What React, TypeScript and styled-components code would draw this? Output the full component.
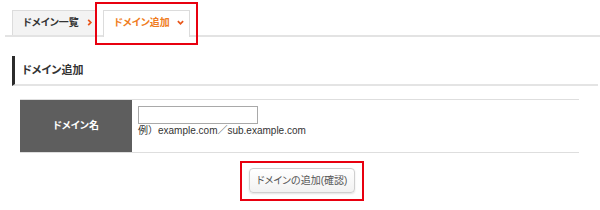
import React from "react";
import styled, { createGlobalStyle } from "styled-components";

const Global = createGlobalStyle`
  html, body { margin: 0; padding: 0; background: #fff; }
  body {
    font-family: "Liberation Sans", "Noto Sans CJK JP", sans-serif;
    color: #333;
    font-size: 10px;
  }
`;

const Page = styled.div`
  width: 600px;
  height: 210px;
  overflow: hidden;
`;

const TabBar = styled.div`
  display: flex;
  align-items: flex-end;
  gap: 7px;
  margin-left: 5px;
  padding: 10px 0 0 7px;
  border-bottom: 2px solid #e3e3e3;
`;

const Tab = styled.div<{ $active?: boolean; $width: number }>`
  position: relative;
  box-sizing: border-box;
  width: ${(p) => p.$width}px;
  height: ${(p) => (p.$active ? 27 : 25)}px;
  margin-bottom: ${(p) => (p.$active ? -2 : 0)}px;
  display: flex;
  align-items: center;
  gap: 7px;
  padding: 0 0 ${(p) => (p.$active ? 3 : 1)}px 10px;
  background: ${(p) => (p.$active ? "#fff" : "#f3f3f3")};
  border: 1px solid #dcdcdc;
  border-bottom: none;
  font-weight: bold;
  font-size: 10px;
  line-height: 12px;
  font-feature-settings: "palt";
  color: ${(p) => (p.$active ? "#ef7d22" : "#333")};
  outline: ${(p) => (p.$active ? "2px solid #e8000f" : "none")};
  outline-offset: 6px;
`;

const Chevron = styled.svg`
  flex: none;
  width: 7px;
  height: 7px;
`;

const Heading = styled.h2`
  margin: 19px 2px 0 12px;
  height: 28px;
  box-sizing: content-box;
  display: flex;
  align-items: center;
  padding-left: 7px;
  border-left: 3px solid #2b2b2b;
  border-bottom: 2px solid #e4e4e4;
  font-size: 11px;
  font-weight: bold;
  line-height: 14px;
  font-feature-settings: "palt";
  color: #333;
`;

const FormTable = styled.div`
  margin: 13px 0 0 20px;
  width: 559px;
  display: grid;
  grid-template-columns: 112px 1fr;
  border-top: 1px solid #dedede;
  border-bottom: 1px solid #dedede;
`;

const HeadCell = styled.div`
  background: #5e5e5e;
  color: #fff;
  font-weight: bold;
  font-size: 10px;
  line-height: 12px;
  font-feature-settings: "palt";
  display: flex;
  align-items: center;
  justify-content: center;
  height: 52px;
`;

const BodyCell = styled.div`
  padding: 6px 6px 0 6px;
`;

const TextInput = styled.input`
  display: block;
  box-sizing: border-box;
  width: 120px;
  height: 18px;
  margin: 0;
  border: 1px solid #a9a9a9;
  background: #fff;
`;

const Example = styled.div`
  margin-top: 1px;
  font-size: 10px;
  line-height: 12px;
  color: #333;
`;

const Actions = styled.div`
  display: flex;
  justify-content: center;
  padding: 8px 0 0 4px;
`;

const Highlight = styled.div`
  display: flex;
  padding: 5px 7px 6px 7px;
  border: 2px solid #e8000f;
`;

const Button = styled.button`
  box-sizing: border-box;
  width: 106px;
  height: 25px;
  padding: 0;
  border: 1px solid #cfcfcf;
  border-radius: 4px;
  background: linear-gradient(#ffffff, #f2f2f2);
  box-shadow: 0 1px 2px rgba(0, 0, 0, 0.12);
  font-family: "Liberation Sans", "Noto Sans CJK JP", sans-serif;
  font-size: 10px;
  line-height: 12px;
  font-feature-settings: "palt";
  color: #555;
  cursor: pointer;
`;

export default function App() {
  return (
    <Page>
      <Global />
      <TabBar>
        <Tab $width={84}>
          ドメイン一覧
          <Chevron viewBox="0 0 8 8">
            <path d="M2.5 1 L5.5 4 L2.5 7" fill="none" stroke="#e8561a" strokeWidth="2" />
          </Chevron>
        </Tab>
        <Tab $active $width={87}>
          ドメイン追加
          <Chevron viewBox="0 0 8 8">
            <path d="M1 2.5 L4 5.5 L7 2.5" fill="none" stroke="#e8561a" strokeWidth="2" />
          </Chevron>
        </Tab>
      </TabBar>
      <Heading>ドメイン追加</Heading>
      <FormTable>
        <HeadCell>ドメイン名</HeadCell>
        <BodyCell>
          <TextInput type="text" />
          <Example>例）example.com／sub.example.com</Example>
        </BodyCell>
      </FormTable>
      <Actions>
        <Highlight>
          <Button type="button">ドメインの追加(確認)</Button>
        </Highlight>
      </Actions>
    </Page>
  );
}
